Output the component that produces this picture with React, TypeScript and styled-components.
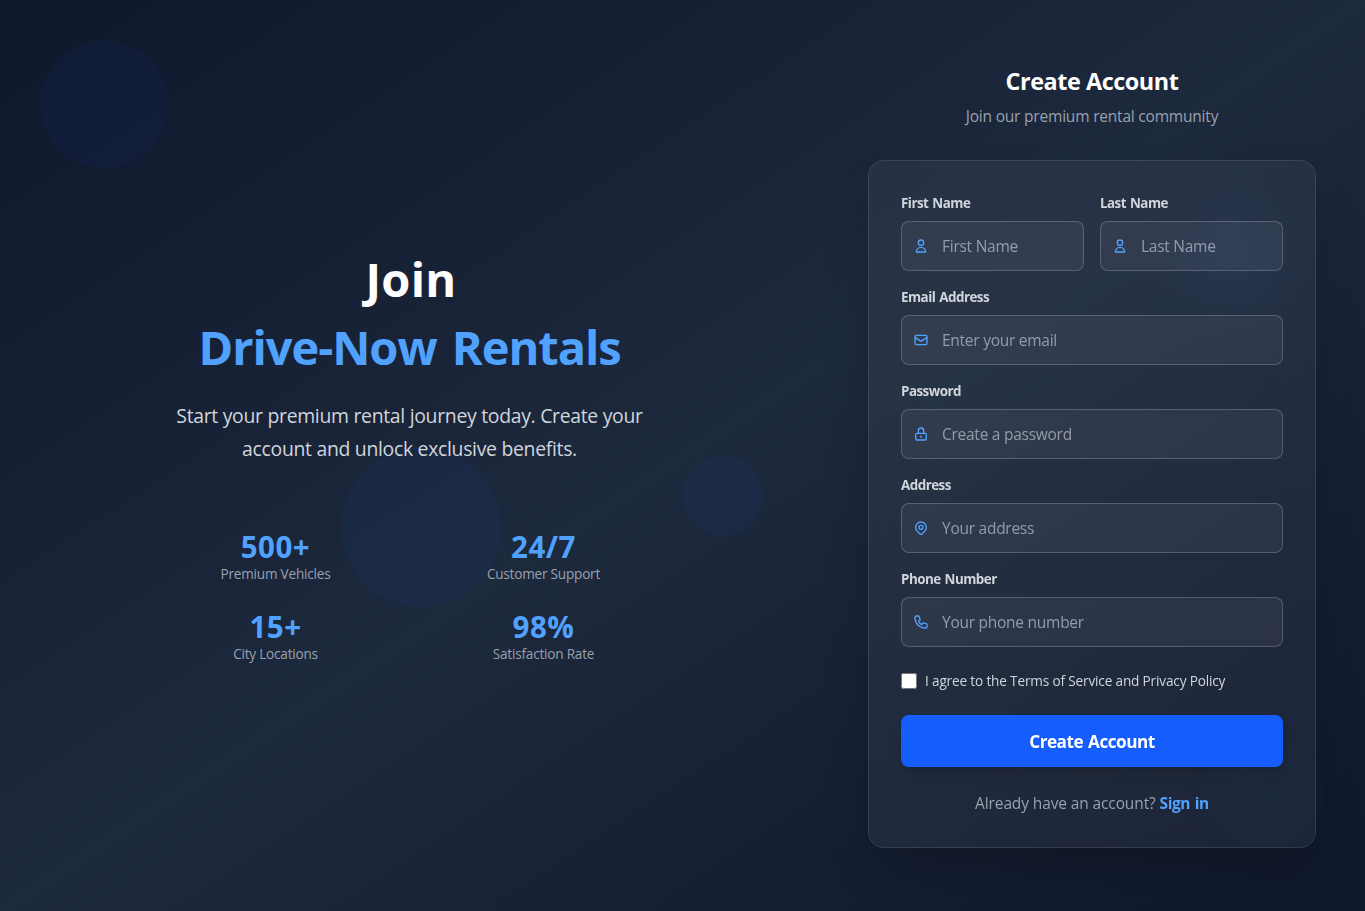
import React from 'react';
import styled, { createGlobalStyle } from 'styled-components';
import { HiOutlineUser, HiOutlineMail, HiOutlineLockClosed, HiOutlineLocationMarker, HiOutlinePhone } from 'react-icons/hi';
import type { IconType } from 'react-icons';

const GlobalStyle = createGlobalStyle`
  *, *::before, *::after { box-sizing: border-box; }
  body {
    margin: 0;
    overflow: hidden;
    background: #0b0f1a;
    font-family: 'Segoe UI', 'Open Sans', 'Noto Sans', sans-serif;
  }
  h1, h2, p { margin: 0; }
`;

const Page = styled.main`
  position: relative;
  display: flex;
  height: 911px;
  overflow: hidden;
  background: linear-gradient(to bottom right in oklab, #0f172b 0%, #1d293d 50%, #0f172b 100%);
`;

const Bubble = styled.div<{ $size: number; $tint: string; $x: string; $y: string }>`
  position: absolute;
  left: ${(p) => p.$x};
  top: ${(p) => p.$y};
  width: ${(p) => p.$size}px;
  height: ${(p) => p.$size}px;
  border-radius: 50%;
  background: ${(p) => p.$tint};
`;

const Hero = styled.section`
  position: relative;
  display: flex;
  flex: 0 0 60%;
  align-items: center;
  justify-content: center;
`;

const HeroInner = styled.div`
  width: 512px;
  padding-bottom: 2px;
  text-align: center;
`;

const HeroTitle = styled.h1`
  color: #fff;
  font-size: 47px;
  font-weight: 700;
  line-height: 68px;
  letter-spacing: 0.3px;
  margin-bottom: 19px;
`;

const Lead = styled.span`
  display: block;
  padding-left: 3px;
`;

const Brand = styled.span`
  display: block;
  color: #51a2ff;
  letter-spacing: -1.05px;
  word-spacing: 4px;
`;

const HeroText = styled.p`
  color: #d1d5dc;
  font-size: 19.4px;
  line-height: 32.5px;
  letter-spacing: -0.3px;
  margin-bottom: 63px;
`;

const Stats = styled.div`
  display: grid;
  grid-template-columns: 1fr 1fr;
  gap: 24px;
`;

const StatValue = styled.div`
  padding-top: 2px;
  color: #51a2ff;
  font-size: 29.5px;
  font-weight: 700;
  line-height: 34px;
  letter-spacing: 0.5px;
`;

const StatLabel = styled.div`
  color: #99a1af;
  font-size: 13.6px;
  line-height: 20px;
  letter-spacing: -0.22px;
`;

const FormSide = styled.section`
  position: relative;
  display: flex;
  flex: 1;
  align-items: center;
  justify-content: center;
`;

const FormColumn = styled.div`
  width: 448px;
`;

const FormHeader = styled.header`
  text-align: center;
  margin-bottom: 32px;
`;

const FormTitle = styled.h2`
  padding-top: 2px;
  color: #fff;
  font-size: 23.4px;
  font-weight: 700;
  line-height: 30px;
  letter-spacing: -0.45px;
  margin-bottom: 8px;
`;

const FormSubtitle = styled.p`
  color: #99a1af;
  font-size: 15.5px;
  line-height: 24px;
  letter-spacing: -0.2px;
`;

const Card = styled.form`
  display: flex;
  flex-direction: column;
  gap: 16px;
  padding: 32px;
  border: 1px solid rgba(255, 255, 255, 0.1);
  border-radius: 16px;
  background: rgba(255, 255, 255, 0.05);
  backdrop-filter: blur(24px);
  box-shadow: 0 25px 50px -12px rgba(0, 0, 0, 0.25);
`;

const NameRow = styled.div`
  display: grid;
  grid-template-columns: repeat(2, minmax(0, 1fr));
  gap: 16px;
`;

const FieldLabel = styled.label`
  display: block;
  color: #d1d5dc;
  font-size: 13.4px;
  font-weight: 700;
  line-height: 20px;
  letter-spacing: -0.52px;
  word-spacing: 1px;
`;

const InputShell = styled.div`
  display: flex;
  align-items: center;
  gap: 13px;
  height: 50px;
  margin-top: 8px;
  padding: 0 12px 0 11px;
  border: 1px solid rgba(255, 255, 255, 0.2);
  border-radius: 8px;
  background: rgba(255, 255, 255, 0.05);
  color: #51a2ff;

  svg { flex: none; }
`;

const TextInput = styled.input`
  flex: 1;
  min-width: 0;
  padding: 0;
  border: 0;
  outline: 0;
  background: transparent;
  color: #fff;
  font-family: inherit;
  font-size: 15.5px;
  line-height: 24px;
  letter-spacing: -0.26px;

  &::placeholder { color: #99a1af; opacity: 0.95; }
`;

const Terms = styled.label`
  display: flex;
  align-items: center;
  gap: 8px;
  margin-top: 8px;
  color: #d1d5dc;
  font-size: 13.6px;
  line-height: 20px;
  letter-spacing: -0.16px;
`;

const Checkbox = styled.input`
  width: 16px;
  height: 16px;
  margin: 0;
`;

const Submit = styled.button`
  height: 52px;
  margin-top: 8px;
  padding: 2px 0 0;
  border: 0;
  border-radius: 8px;
  background: #155dfc;
  box-shadow: 0 10px 15px -3px rgba(0, 0, 0, 0.1), 0 4px 6px -4px rgba(0, 0, 0, 0.1);
  color: #fff;
  font-family: inherit;
  font-size: 17.2px;
  font-weight: 700;
  letter-spacing: -0.5px;
  word-spacing: 1px;
`;

const SignIn = styled.p`
  margin-top: 8px;
  color: #99a1af;
  font-size: 15.5px;
  line-height: 24px;
  letter-spacing: -0.12px;
  text-align: center;
`;

const SignInLink = styled.a`
  color: #51a2ff;
  font-weight: 700;
  letter-spacing: -0.4px;
  word-spacing: 1px;
`;

const stats = [
  { value: '500+', label: 'Premium Vehicles' },
  { value: '24/7', label: 'Customer Support' },
  { value: '15+', label: 'City Locations' },
  { value: '98%', label: 'Satisfaction Rate' },
];

type FieldProps = { label: string; placeholder: string; icon: IconType; type?: string };

function Field({ label, placeholder, icon: Icon, type = 'text' }: FieldProps) {
  return (
    <div>
      <FieldLabel>{label}</FieldLabel>
      <InputShell>
        <Icon size={16} />
        <TextInput type={type} placeholder={placeholder} />
      </InputShell>
    </div>
  );
}

export default function App() {
  return (
    <>
      <GlobalStyle />
      <Page>
        <Bubble $size={128} $tint="rgba(21, 93, 252, 0.05)" $x="40px" $y="40px" />
        <Bubble $size={96} $tint="rgba(43, 127, 255, 0.07)" $x="1185px" $y="208px" />
        <Bubble $size={160} $tint="rgba(21, 93, 252, 0.05)" $x="341px" $y="447px" />
        <Bubble $size={80} $tint="rgba(21, 93, 252, 0.05)" $x="50%" $y="50%" />
        <Bubble $size={112} $tint="rgba(0, 184, 219, 0.02)" $x="1213px" $y="737px" />
        <Hero>
          <HeroInner>
            <HeroTitle>
              <Lead>Join</Lead>
              <Brand>Drive-Now Rentals</Brand>
            </HeroTitle>
            <HeroText>Start your premium rental journey today. Create your account and unlock exclusive benefits.</HeroText>
            <Stats>
              {stats.map((s) => (
                <div key={s.label}>
                  <StatValue>{s.value}</StatValue>
                  <StatLabel>{s.label}</StatLabel>
                </div>
              ))}
            </Stats>
          </HeroInner>
        </Hero>
        <FormSide>
          <FormColumn>
            <FormHeader>
              <FormTitle>Create Account</FormTitle>
              <FormSubtitle>Join our premium rental community</FormSubtitle>
            </FormHeader>
            <Card>
              <NameRow>
                <Field label="First Name" placeholder="First Name" icon={HiOutlineUser} />
                <Field label="Last Name" placeholder="Last Name" icon={HiOutlineUser} />
              </NameRow>
              <Field label="Email Address" placeholder="Enter your email" icon={HiOutlineMail} type="email" />
              <Field label="Password" placeholder="Create a password" icon={HiOutlineLockClosed} type="password" />
              <Field label="Address" placeholder="Your address" icon={HiOutlineLocationMarker} />
              <Field label="Phone Number" placeholder="Your phone number" icon={HiOutlinePhone} type="tel" />
              <Terms>
                <Checkbox type="checkbox" />
                I agree to the Terms of Service and Privacy Policy
              </Terms>
              <Submit type="button">Create Account</Submit>
              <SignIn>
                Already have an account? <SignInLink>Sign in</SignInLink>
              </SignIn>
            </Card>
          </FormColumn>
        </FormSide>
      </Page>
    </>
  );
}
